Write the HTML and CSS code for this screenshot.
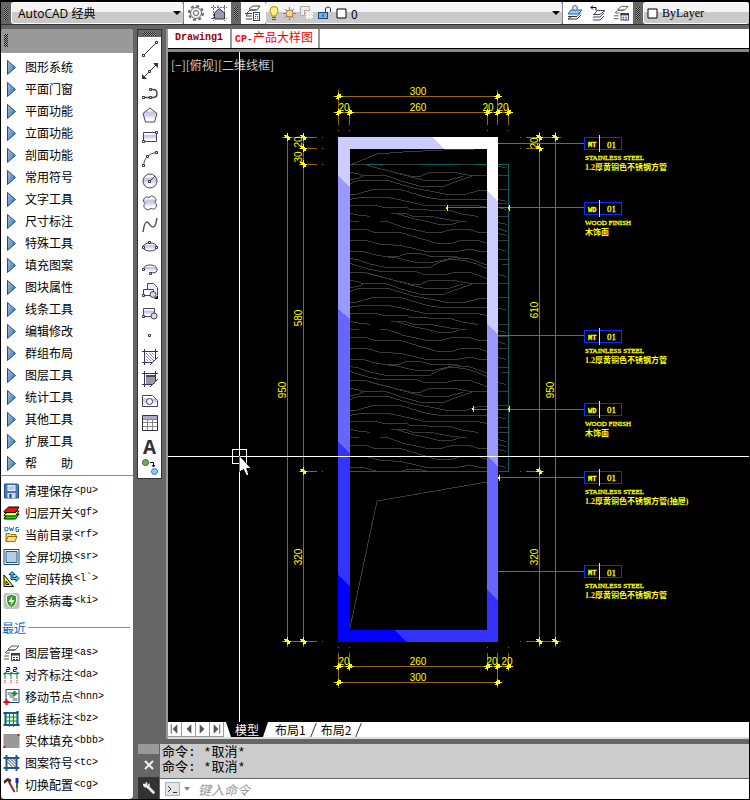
FILE: index.html
```
<!DOCTYPE html>
<html>
<head>
<meta charset="utf-8">
<title>CP-产品大样图</title>
<link rel="stylesheet" href="styles.css">
</head>
<body>
<svg class="defs" aria-hidden="true">
  <defs>
    <linearGradient id="blue" x1="0" y1="0" x2="1" y2="1"><stop offset="0" stop-color="#b4b4d8"/><stop offset=".5" stop-color="#6c9bd2"/><stop offset="1" stop-color="#235f9c"/></linearGradient>
    <linearGradient id="soft" x1="0" y1="0" x2="0" y2="1"><stop offset=".2" stop-color="#fff"/><stop offset=".3" stop-color="#c8c8c8"/><stop offset=".5" stop-color="#ccf"/><stop offset=".8" stop-color="#fff"/></linearGradient>
    <symbol id="tri" viewBox="0 0 9 15"><path d="M.5 .5v14l8-7z" fill="url(#blue)" stroke="#1f5373"/></symbol>
    <symbol id="layers" viewBox="0 0 17 16"><path d="M5 4 9 1h7l-4 4H5M2 8l3-3h7M1 11h5M3 8h4M1 14h5" fill="none" stroke="#555"/><rect x="8.500" y="8.500" width="8" height="7" fill="#fff" stroke="#446"/><path d="M8 9.500h9" stroke="#336" stroke-width="2"/><path d="M10 12.500h2m1 0h2m-5 2h2m1 0h2" stroke="#336"/></symbol>
  </defs>
</svg>

<header class="toolbar">
  <span class="grip"></span>
  <label class="combo workspace"><select aria-label="工作空间"><option>AutoCAD 经典</option></select></label>
  <div class="tools">
    <button aria-label="设置"><svg viewBox="0 0 16 16"><circle cx="8" cy="8" r="7" fill="none" stroke="#667" stroke-width="2" stroke-dasharray="3 2.500"/><circle cx="8" cy="8" r="5.500" fill="#eee" stroke="#667"/><circle cx="8" cy="8" r="2.500" fill="#fff" stroke="#556"/></svg></button>
    <button aria-label="工作空间"><svg viewBox="0 0 16 16"><path d="M2.500 0v16M13.500 0v16M0 2.500h16M0 13.500h16M7 0v3" stroke="#666" stroke-dasharray="2 1"/><path d="M3.500 14V8L8 3.500 13.500 8v6z" fill="#99a" stroke="#335"/></svg></button>
  </div>
  <span class="grip"></span>
  <div class="tools">
    <button aria-label="图层特性"><svg viewBox="0 0 16 16"><path d="M4 4 8 1h7l-3 4H4M2 8l3-3h6M0 8.500h7M3 8l-2 3h6M1 14h6" fill="none" stroke="#444"/><rect x="8.500" y="7.500" width="6" height="8" fill="#fff" stroke="#444"/><path d="M10 9.500h3" stroke="#26f"/><path d="M10 11.500h1m1 0h1m-3 2h1m1 0h1" stroke="#444"/></svg></button>
  </div>
  <label class="combo layer">
    <svg width="10" height="15" viewBox="0 0 10 15"><path d="M3 10C3 8 1 7 1 4.500a4 4 0 0 1 8 0C9 7 7 8 7 10z" fill="#ffef80" stroke="#a80"/><path d="M3 11.500h4m-4 2h4" stroke="#555"/></svg>
    <svg width="13" height="13" viewBox="0 0 13 13"><path d="M6.500 0v13M0 6.500h13M2 2l9 9M11 2l-9 9" stroke="#975"/><circle cx="6.500" cy="6.500" r="3.500" fill="#ffd98a" stroke="#a74"/></svg>
    <svg width="14" height="14" viewBox="0 0 14 14"><path d="M.5 9.500v-9h9v4h-5v5z" fill="#eee" stroke="#aaa"/><path d="M6 8h7M6 11h7M8 6v7m3-7v7" stroke="#fff" stroke-width="2" stroke-dasharray="2 1"/></svg>
    <svg width="14" height="14" viewBox="0 0 14 14"><rect x=".5" y="6.500" width="9" height="6" fill="#6bb4f0" stroke="#124b7c"/><path d="M7.500 6V3q0-2 2.500-2t2.500 2v3M5 8v3" fill="none" stroke="#333"/></svg>
    <svg width="11" height="11" viewBox="0 0 11 11"><path d="M1 1h9v9H1z" fill="#fff" stroke="#000"/></svg>
    <select aria-label="图层"><option>0</option></select>
  </label>
  <div class="tools">
    <button aria-label="置为当前"><svg viewBox="0 0 16 16"><path d="M1 14h9l4-4M1 11.500h9l4-4M1 14l3-2" fill="none" stroke="#333"/><path d="M1 9l3-4h11l-4 4z" fill="#9cf" stroke="#06b"/><circle cx="8" cy="3" r="2.500" fill="#ddd" stroke="#667"/></svg></button>
    <button aria-label="上一个图层"><svg viewBox="0 0 16 16"><path d="M3 15h7l4-4M3 12h7l4-4M3 9.500h7l5-4H7l-3 4" fill="none" stroke="#446"/><path d="M6 5.500V2.500H1M3 .5l-2 2 2 2" fill="none" stroke="#000"/></svg></button>
    <button aria-label="图层状态"><svg><use href="#layers"/></svg></button>
  </div>
  <span class="grip"></span>
  <label class="combo color"><svg width="11" height="11" viewBox="0 0 11 11"><path d="M1 1h9v9H1z" fill="#fff" stroke="#000"/></svg><select class="serif" aria-label="颜色"><option>ByLayer</option></select></label>
</header>

<main class="main">
  <nav class="palette">
    <div class="palette-head"><span class="grip"></span></div>
    <div class="menu">
      <button><svg><use href="#tri"/></svg>图形系统</button>
      <button><svg><use href="#tri"/></svg>平面门窗</button>
      <button><svg><use href="#tri"/></svg>平面功能</button>
      <button><svg><use href="#tri"/></svg>立面功能</button>
      <button><svg><use href="#tri"/></svg>剖面功能</button>
      <button><svg><use href="#tri"/></svg>常用符号</button>
      <button><svg><use href="#tri"/></svg>文字工具</button>
      <button><svg><use href="#tri"/></svg>尺寸标注</button>
      <button><svg><use href="#tri"/></svg>特殊工具</button>
      <button><svg><use href="#tri"/></svg>填充图案</button>
      <button><svg><use href="#tri"/></svg>图块属性</button>
      <button><svg><use href="#tri"/></svg>线条工具</button>
      <button><svg><use href="#tri"/></svg>编辑修改</button>
      <button><svg><use href="#tri"/></svg>群组布局</button>
      <button><svg><use href="#tri"/></svg>图层工具</button>
      <button><svg><use href="#tri"/></svg>统计工具</button>
      <button><svg><use href="#tri"/></svg>其他工具</button>
      <button><svg><use href="#tri"/></svg>扩展工具</button>
      <button><svg><use href="#tri"/></svg>帮　　助</button>
    </div>
    <div class="shortcuts">
      <button><svg viewBox="0 0 16 16"><path d="M1 1h13l1 1v13H1z" fill="#4679b8" stroke="#234f86"/><path d="M4 2h8v6H4z" fill="#eef"/><path d="M5 4h6M5 6h6" stroke="#8ab"/><path d="M4 10h8v5H4z" fill="#cde"/><path d="M6 11h2v4H6z" fill="#246"/></svg>清理保存<span>&lt;pu&gt;</span></button>
      <button><svg viewBox="0 0 16 16"><path d="M.5 13 5 9h10.500L12 14H1z" fill="#0f0" stroke="#000"/><path d="M.5 10 5 6h10.500L12 11H1z" fill="#ff0" stroke="#000"/><path d="M.5 6.500 5 2h10.500L12 7.500H1z" fill="#e11" stroke="#000"/></svg>归层开关<span>&lt;gf&gt;</span></button>
      <button><svg viewBox="0 0 16 16"><path d="M1.500 0v4h2l1-1V1l-1-1zM6 0l1 4 1-3 1 3 1-4M15 .5h-2.500v4H15v-2h-1" fill="none" stroke="#1668b8"/><path d="M2.500 14.500v-8h4l1 1h5v2" fill="#ffd76a" stroke="#a06800"/><path d="M2.500 14.500l2-5h9l-2 5z" fill="#ffe08a" stroke="#a06800"/></svg>当前目录<span>&lt;rf&gt;</span></button>
      <button><svg viewBox="0 0 16 16"><path d="M.5 .5h15v15H.5z" fill="#fff" stroke="#124b7c"/><path d="M2.500 2.500h11v11h-11z" fill="#b4cfe8" stroke="#357"/></svg>全屏切换<span>&lt;sr&gt;</span></button>
      <button><svg viewBox="0 0 16 16"><path d="M.5 4v11.500H10z" fill="#ff0" stroke="#000"/><path d="M2.500 10v3.500h3z" fill="#fff" stroke="#000"/><path d="M7.500 8.500v-5h-2L8.500.5l3 3h-2v3h3v-2l3 3-3 3v-2z" fill="#3df" stroke="#036"/></svg>空间转换<span>&lt;l`&gt;</span></button>
      <button><svg viewBox="0 0 16 16"><rect width="16" height="16" rx="3" fill="#bcc4bc"/><path d="M8 1l5 2v5q0 4-5 7-5-3-5-7V3z" fill="#3f9a2b" stroke="#fff"/><path d="M9 3 5 9h3l-1 4 4-6H8z" fill="#fff"/></svg>查杀病毒<span>&lt;ki&gt;</span></button>
    </div>
    <h2>最近</h2>
    <div class="recent">
      <button><svg><use href="#layers"/></svg>图层管理<span>&lt;as&gt;</span></button>
      <button><svg viewBox="0 0 16 16"><path d="M0 6.500h16M1.500 5v7m6-7v7m6-7v7M0 8l3-3m3 3 3-3m3 3 3-3" stroke="#183" fill="none"/><path d="M3 .5h3v2H3v2h3M10 .5h3v2h-3v2h3" stroke="#00f" fill="none"/><path d="M1.500 13v3m6-3v3m6-3v3" stroke="red" stroke-dasharray="1 1"/></svg>对齐标注<span>&lt;da&gt;</span></button>
      <button><svg viewBox="0 0 16 16"><path d="M2.500 .5h13v13h-13z" fill="#fff" stroke="#124b7c"/><path d="M4 3h4v3h3v3h3v3H9V9H6V6H4z" fill="#aaa"/><path d="M8 4.500h6M11 2v5" stroke="#182" stroke-width="2"/><path d="M0 13h6M3 10v6" stroke="red" stroke-width="2"/></svg>移动节点<span>&lt;hnn&gt;</span></button>
      <button><svg viewBox="0 0 16 16"><path d="M2 2h12v12H2z" fill="#dfd" stroke="#1a55a0" stroke-width="2"/><path d="M6 2v14M10 2v14M2 6h12M2 10h12" stroke="#182"/><path d="M0 2h2M0 14h2M14 0v2M14 14h2" stroke="#124b7c" stroke-width="2"/></svg>垂线标注<span>&lt;bz&gt;</span></button>
      <button><svg viewBox="0 0 16 16"><path d="M0 1h16v14H0z" fill="#999"/><path d="M14 1h2v2h-2zM0 13h2v2H0z" fill="red"/></svg>实体填充<span>&lt;bbb&gt;</span></button>
      <button><svg viewBox="0 0 16 16"><path d="M3 0v16M13 0v16M0 3h16M0 13h16" stroke="#225493" stroke-width="2"/><path d="M4 4l8 8M7 4l5 5M4 7l5 5M10 4l2 2" stroke="#346"/></svg>图案符号<span>&lt;tc&gt;</span></button>
      <button><svg viewBox="0 0 16 16"><path d="M0 4l4-3 3 1 1 2-2 2-2-2-3 3z" fill="#333"/><path d="M5 4l6 11" stroke="#a22" stroke-width="2"/><path d="M13.500 1v5" stroke="#22a" stroke-width="3"/><path d="M13.500 6v5" stroke="#182" stroke-width="2"/><path d="M13.500 11v4" stroke="#333"/></svg>切换配置<span>&lt;cg&gt;</span></button>
    </div>
  </nav>

  <div class="work">
    <div class="work-row">
      <div class="draw-tools">
        <span class="grip wide"></span>
        <button aria-label="直线"><svg viewBox="0 0 16 16"><path d="M1 15 15 1" stroke="#333"/><path d="M.5 13.500h2v2h-2zm13-13h2v2h-2z" fill="#fff" stroke="#333"/></svg></button>
        <button aria-label="构造线"><svg viewBox="0 0 16 16"><path d="M1 15 15 1" stroke="#333"/><path d="M0 11v5h5zM16 5V0h-5z" fill="#333"/><path d="M6.500 7.500h2v2h-2z" fill="#fff" stroke="#333"/></svg></button>
        <button aria-label="多段线"><svg viewBox="0 0 16 16"><path d="M1 12.500h10q4 0 4-4t-4-4H9" fill="none" stroke="#445" stroke-width="1.500"/><path d="M.5 11.500h2v2h-2zm7 0h2v2h-2zm0-8h2v2h-2z" fill="#fff" stroke="#333"/></svg></button>
        <button aria-label="正多边形"><svg viewBox="0 0 16 16"><path d="M8 1l7 5.500L12.500 15h-9L1 6.500z" fill="url(#soft)" stroke="#445"/></svg></button>
        <button aria-label="矩形"><svg viewBox="0 0 16 16"><path d="M1.500 3.500h13v9h-13z" fill="url(#soft)" stroke="#445"/><path d="M.5 11.500h2v2h-2zm13-9h2v2h-2z" fill="#fff" stroke="#333"/></svg></button>
        <button aria-label="圆弧"><svg viewBox="0 0 16 16"><path d="M1.500 14Q3 3 14 1.500" fill="none" stroke="#456"/><path d="M.5 13.500h2v2h-2zm13-13h2v2h-2zm-9 4h2v2h-2z" fill="#fff" stroke="#333"/></svg></button>
        <button aria-label="圆"><svg viewBox="0 0 16 16"><circle cx="8" cy="8" r="7" fill="url(#soft)" stroke="#445"/><path d="M8 8l5-5" stroke="#333"/><path d="M6.500 7.500h2v2h-2z" fill="#fff" stroke="#333"/></svg></button>
        <button aria-label="修订云线"><svg viewBox="0 0 16 16"><path d="M3 8.500A3.500 3.500 0 1 1 7 2.500A3.500 3.500 0 1 1 13 7.500A3.500 3.500 0 1 1 9 13.500A4 3.500 0 1 1 3 8.500z" fill="url(#soft)" stroke="#456"/></svg></button>
        <button aria-label="样条曲线"><svg viewBox="0 0 16 16"><path d="M1 15C2 8 3 5 5 5s3 5 6 5 3-5 4-9" fill="none" stroke="#556" stroke-width="1.500"/></svg></button>
        <button aria-label="椭圆"><svg viewBox="0 0 16 16"><ellipse cx="8" cy="8" rx="7" ry="4" fill="url(#soft)" stroke="#445"/><path d="M.5 7.500h2v2h-2zm13 0h2v2h-2zm-7-5h2v2h-2z" fill="#fff" stroke="#333"/></svg></button>
        <button aria-label="椭圆弧"><svg viewBox="0 0 16 16"><path d="M1.500 8Q2 4 8 4t7 4-6 4" fill="url(#soft)" stroke="#445"/><path d="M.5 7.500h2v2h-2zm7 4h2v2h-2z" fill="#fff" stroke="#333"/></svg></button>
        <button aria-label="插入块"><svg viewBox="0 0 16 16"><path d="M5.500 6V.5h6l4 4V12" fill="#eef" stroke="#446"/><path d="M1.500 6.500h10v6h-10z" fill="#fff" stroke="#445"/><circle cx="11" cy="11.500" r="3" fill="#ddd" stroke="#445"/><path d="M16 12v4h-4z"/><path d="M.5 11.500h2v2h-2z" fill="#fff" stroke="#333"/></svg></button>
        <button aria-label="创建块"><svg viewBox="0 0 16 16"><path d="M1.500 3.500h11v8h-11z" fill="url(#soft)" stroke="#445"/><circle cx="12" cy="11" r="3" fill="#ddd" stroke="#445"/><path d="M.5 10.500h2v2h-2z" fill="#fff" stroke="#333"/></svg></button>
        <button aria-label="点"><svg viewBox="0 0 16 16"><path d="M6.500 7.500h2v2h-2z" fill="#fff" stroke="#336"/></svg></button>
        <button aria-label="图案填充"><svg viewBox="0 0 16 16"><path d="M2.500 0v16M13.500 0v10M0 2.500h16M0 13.500h10M8 16l8-8" stroke="#336"/><path d="M4 4l8 8M7 4l5 5M4 7l5 5M10 4l2 2M4 10l2 2" stroke="#88a"/></svg></button>
        <button aria-label="渐变色"><svg viewBox="0 0 16 16"><path d="M4 4h9v9H4z" fill="#999"/><path d="M4 4h9v2H4z" fill="#446"/><path d="M2.500 0v16M13.500 0v10M0 2.500h16M0 13.500h10M8 16l8-8" stroke="#336"/></svg></button>
        <button aria-label="面域"><svg viewBox="0 0 16 16"><path d="M.5 2.500h10l5 5v6H.5z" fill="url(#soft)" stroke="#446"/><circle cx="7.500" cy="8.500" r="3" fill="#fff" stroke="#336"/></svg></button>
        <button aria-label="表格"><svg viewBox="0 0 16 16"><path d="M.5 .5h15v15H.5z" fill="#fff" stroke="#333"/><path d="M1 2.500h14" stroke="#aac" stroke-width="3"/><path d="M5.500 4v11m5-11v11M1 7.500h14M1 11.500h14M1 4.500h14" stroke="#888"/></svg></button>
        <button aria-label="多行文字" class="letter">A</button>
        <button aria-label="添加选定对象"><svg viewBox="0 0 16 16"><circle cx="3.500" cy="3.500" r="3" fill="#7a5" stroke="#363"/><circle cx="12.500" cy="12.500" r="3" fill="#8cf" stroke="#37a"/><path d="M8 3.500h3.500V8M10 6l1.500 2L13 6" fill="none" stroke="#000"/></svg></button>
      </div>

      <section class="document">
        <div class="file-tabs"><button class="active">Drawing1</button><button><span>CP-</span>产品大样图</button></div>
        <div class="canvas">
          <svg class="drawing">
            <defs>
              <clipPath id="panel"><rect x="350" y="165" width="137" height="306"/></clipPath>
              <clipPath id="frame"><path clip-rule="evenodd" d="M338 137h160v505H338zM350 149v481h137V149z"/></clipPath>
              <g id="grain" fill="none" stroke="#3a3a3a" stroke-width="3">
                <path d="M292 256 320 264 370 276 427 290H448L475 279H560L605 287H651M240 278 262 280 280 288 262 296 240 298M280 288H350L400 305 455 320H520L560 304 605 289M330 266 420 290 470 303H530L580 288M240 312 262 302H355L430 324 500 337 540 345H580L625 332 651 330M240 344 262 342 310 328H390L470 352 510 358H651M240 358 275 352H355L415 365 465 376H620L651 382"/>
                <path d="M240 376H317L340 382H410L420 388 500 391H540L575 402 623 409M240 400 265 405 300 409M363 400 410 402 425 408 480 409 540 420 575 424H590M385 403 430 416 470 424 505 433H545L570 425M240 420 245 424H267M330 424 355 426 400 442 475 458H510L545 449H600L625 457 651 459M240 448H290L310 457H390L440 472 500 490H545L575 481H625L651 490"/>
                <path d="M240 481 290 482 330 493 390 496 430 505 470 515H555L605 507 625 513 651 516M240 514 285 516 325 527 355 530H385L410 520H450L480 529H545L575 537H600L651 555M345 530 380 534 420 544 440 547H490L530 538 560 530 575 537M240 536 260 538 300 552 345 562H480L510 546 540 538 580 541 620 552 651 566M240 550 290 566 340 576H440L470 585H520L555 577H600L651 596M240 579H290L370 600"/>
              </g>
              <g id="chip" fill="none" stroke="#ff0"><path d="M-2 2.500h2M-1 1.500h4M-3.500 .5H5M-1-.5h4M1-1.500h2"/><path d="M.5-3V4"/></g>
              <g id="chipv" fill="none" stroke="#ff0"><path d="M-3-1.500h3M-2-.5h4M-3 .5h7M0 1.500h3M1 2.500h2"/><path d="M.5-4V4"/></g>
              <g id="dot" fill="#ff0"><path d="M-2 0h1v-1h1v-2h1v6h-1V1h-1V0z"/></g>
              <g id="tag"><path d="M.5 .5h37v12H.5z" fill="none" stroke="#03f"/><path d="M15.500-2v17" stroke="#ff0"/></g>
            </defs>

            <g transform="translate(-168 -52)">
            <g class="grain">
              <path d="M350 165 377 154 403 152 443 150 476 149" fill="none" stroke="#3a3a3a"/>
              <g clip-path="url(#panel)">
                <use href="#grain" transform="translate(270 80) scale(.33333)"/>
                <use href="#grain" transform="translate(270 188) scale(.33333)"/>
                <use href="#grain" transform="translate(270 296) scale(.33333)"/>
              </g>
              <path d="M350 628 377 501 487 482" fill="none" stroke="#3a3a3a"/>
              <path d="M498 166.500l8 1M498 175.500h10M498 189.500h10M498 199.500l9 2M498 203.500h10M498 207.500l8 2M498 216.500h10M498 222.500l9 2M498 228.500l9 3M498 233.500l9 2M498 240.500h10M498 248.500l8 3M498 259.500h10M502 264.500h6M498 274.500l8 2M498 283.500h10M498 297.500h10M498 308.500l8 1M498 324.500h10M498 330.500l8 2M498 336.500h10M498 341.500l8 3M498 348.500h10M498 357.500l8 2M498 367.500h10M502 372.500h6M498 382.500l8 2M498 391.500h10M498 405.500h10M498 417.500l8 1M498 427.500h10M498 432.500h10M498 439.500l8 2M498 444.500l8 2M498 449.500l8 2M498 456.500h10M498 465.500l8 2" fill="none" stroke="#3a3a3a"/>
            </g>
            <path d="M367 164.500h16m37 0h40m14 0h13m11 0h10.500v306.500h-10M487 471.500H350" fill="none" stroke="#076666"/>
            <path d="M350 164.500h17m16 0h37m40 0h14" stroke="#3a3a3a"/>

            <g clip-path="url(#frame)">
              <path d="M338 137h160v505H338z" fill="#ccf"/>
              <path d="M432 137h66v65l-11-12-43-41z" fill="#fff"/>
              <path d="M338 176l12 11v140h-12z" fill="#99f"/>
              <path d="M338 309l12 10v140h-12z" fill="#66f"/>
              <path d="M338 442l12 11v140h-12z" fill="#33f"/>
              <path d="M338 575l12 11v44h45l11 12h-68z" fill="#00f"/>
              <path d="M487 324l11 11v140h-11z" fill="#99f"/>
              <path d="M487 456l11 11v140h-11z" fill="#66f"/>
              <path d="M487 590l11 10v42h-92l-11-12h92z" fill="#33f"/>
            </g>

            <g fill="none" stroke="#960">
              <path d="M333 96.500h168M333 112.500h180M338.500 90v35M338.500 130v1M349.500 107v18M349.500 130v1M487.500 107v18M487.500 130v1M497.500 90v35M508.500 107v18M508.500 130v1"/>
              <path d="M333 666.500h180M333 682.500h165M338.500 653v35M338.500 647v1M349.500 653v18M349.500 647v1M487.500 653v18M487.500 647v1M497.500 653v35M508.500 653v18M508.500 647v1"/>
              <path d="M287.500 137v510M303.500 137v510M282 137.500h35M322 137.500h1M299 148.500h18M322 148.500h1M299 164.500h18M322 164.500h1M299 471.500h18M322 471.500h1M282 641.500h35M322 641.500h1"/>
              <path d="M539.500 132v515M555.500 132v515M526 137.500h35M520 137.500h1M526 148.500h18M520 148.500h1M526 471.500h18M520 471.500h1M526 641.500h35M520 641.500h1"/>
              <path d="M498 143.500h86M447 207.500h40M498 207.500h86M498 335.500h86M473 409.500h14M498 409.500h86M499 477.500h85M498 571.500h86"/>
            </g>
            <use href="#chip" x="338" y="96"/><use href="#chip" x="497" y="96"/><use href="#chip" x="338" y="112"/><use href="#chip" x="349" y="112"/><use href="#chip" x="487" y="112"/><use href="#chip" x="497" y="112"/><use href="#chip" x="508" y="112"/>
            <use href="#chip" x="338" y="666"/><use href="#chip" x="349" y="666"/><use href="#chip" x="487" y="666"/><use href="#chip" x="497" y="666"/><use href="#chip" x="508" y="666"/><use href="#chip" x="338" y="682"/><use href="#chip" x="497" y="682"/>
            <use href="#chipv" x="287" y="137"/><use href="#chipv" x="303" y="137"/><use href="#chipv" x="303" y="148"/><use href="#chipv" x="303" y="164"/><use href="#chipv" x="303" y="471"/><use href="#chipv" x="287" y="641"/><use href="#chipv" x="303" y="641"/>
            <use href="#chipv" x="539" y="137"/><use href="#chipv" x="555" y="137"/><use href="#chipv" x="539" y="148"/><use href="#chipv" x="539" y="471"/><use href="#chipv" x="539" y="641"/><use href="#chipv" x="555" y="641"/>
            <use href="#dot" x="447" y="208"/><use href="#dot" x="509" y="208"/><use href="#dot" x="473" y="409"/><use href="#dot" x="509" y="409"/><use href="#dot" x="499" y="478"/>

            <g class="dim">
              <text x="418" y="95">300</text><text x="344" y="111">20</text><text x="418" y="111">260</text><text x="488" y="111">20</text><text x="503" y="111">20</text>
              <text x="344" y="665">20</text><text x="418" y="665">260</text><text x="492" y="665">20</text><text x="507" y="665">20</text><text x="418" y="681">300</text>
              <text transform="translate(302 142) rotate(-90)">20</text><text transform="translate(302 157) rotate(-90)">30</text>
              <text transform="translate(302 318) rotate(-90)">580</text><text transform="translate(286 390) rotate(-90)">950</text><text transform="translate(302 557) rotate(-90)">320</text>
              <text transform="translate(538 143) rotate(-90)">20</text><text transform="translate(538 310) rotate(-90)">610</text><text transform="translate(554 390) rotate(-90)">950</text><text transform="translate(538 557) rotate(-90)">320</text>
            </g>

            <g class="note">
              <g transform="translate(584 137)"><use href="#tag"/><text class="code" x="4" y="10">MT</text><text class="num" x="23" y="11">01</text><text x="1" y="23">STAINLESS STEEL</text><text class="cn" x="1" y="33">1.2厚黄铜色不锈钢方管</text></g>
              <g transform="translate(584 202)"><use href="#tag"/><text class="code" x="4" y="10">WD</text><text class="num" x="23" y="10">01</text><text x="1" y="23">WOOD FINISH</text><text class="cn" x="1" y="33">木饰面</text></g>
              <g transform="translate(584 330)"><use href="#tag"/><text class="code" x="4" y="10">MT</text><text class="num" x="23" y="10">01</text><text x="1" y="23">STAINLESS STEEL</text><text class="cn" x="1" y="33">1.2厚黄铜色不锈钢方管</text></g>
              <g transform="translate(584 403)"><use href="#tag"/><text class="code" x="4" y="10">WD</text><text class="num" x="23" y="10">01</text><text x="1" y="23">WOOD FINISH</text><text class="cn" x="1" y="33">木饰面</text></g>
              <g transform="translate(584 471)"><use href="#tag"/><text class="code" x="4" y="10">MT</text><text class="num" x="23" y="10">01</text><text x="1" y="23">STAINLESS STEEL</text><text class="cn" x="1" y="33">1.2厚黄铜色不锈钢方管(抽屉)</text></g>
              <g transform="translate(584 565)"><use href="#tag"/><text class="code" x="4" y="10">MT</text><text class="num" x="23" y="11">01</text><text x="1" y="23">STAINLESS STEEL</text><text class="cn" x="1" y="33">1.2厚黄铜色不锈钢方管</text></g>
            </g>

            <text class="view" x="171" y="70">[−][俯视][二维线框]</text>
            <path d="M239.500 52v670M168 456.500h582M232.500 449.500h14v14h-14z" fill="none" stroke="#fff"/>
            <path d="M239.500 456v16l4-3 3 6 2-1-2-6h4z" fill="#fff" stroke="#000" stroke-width=".5"/>
            </g>
          </svg>
        </div>
        <div class="layout-tabs">
          <button class="step" aria-label="第一个"><svg viewBox="0 0 14 14"><path d="M3.500 2v10" stroke="#555"/><path d="M10 2v10L5 7z" fill="#555"/></svg></button>
          <button class="step" aria-label="上一个"><svg viewBox="0 0 14 14"><path d="M10 2v10L5 7z" fill="#555"/></svg></button>
          <button class="step" aria-label="下一个"><svg viewBox="0 0 14 14"><path d="M4 2v10l5-5z" fill="#555"/></svg></button>
          <button class="step" aria-label="最后一个"><svg viewBox="0 0 14 14"><path d="M4 2v10l5-5z" fill="#555"/><path d="M10.500 2v10" stroke="#555"/></svg></button>
          <button class="sheet active">模型</button><button class="sheet">布局1</button><button class="sheet">布局2</button>
        </div>
      </section>
    </div>

    <section class="command">
      <div class="command-side">
        <span class="handle"></span>
        <button aria-label="关闭"><svg viewBox="0 0 14 14"><path d="M3 3l8 8M11 3l-8 8" stroke="#eee" stroke-width="2"/></svg></button>
        <button class="dark" aria-label="自定义"><svg viewBox="0 0 16 16"><path d="M6 6l8 8" stroke="#eee" stroke-width="3"/><path d="M5 1.500v3h-3M2 3q0 4 3.500 3.500T7.500 3" fill="none" stroke="#eee" stroke-width="2"/></svg></button>
      </div>
      <div class="command-body">
        <div class="history"><p>命令: *取消*</p><p>命令: *取消*</p></div>
        <label class="prompt">
          <svg width="15" height="14" viewBox="0 0 15 14"><path d="M.5 .5h14v13H.5z" fill="#e4e4e8" stroke="#9bb"/><path d="M3 4l3 3-3 3M8 10.500h4" fill="none" stroke="#334"/></svg>
          <svg width="6" height="4" viewBox="0 0 6 4"><path d="M0 0h6L3 4z" fill="#888"/></svg>
          <input type="text" placeholder="键入命令" aria-label="命令">
        </label>
      </div>
    </section>
  </div>
</main>
</body>
</html>
```
FILE: styles.css
```
* { box-sizing: border-box; }

body {
  margin: 0;
  min-height: 100vh;
  display: flex;
  flex-direction: column;
  background: #666;
  border: 1px solid #000;
  border-top-width: 2px;
  font-family: "Noto Sans CJK SC", sans-serif;
  font-size: 12px;
  color: #000;
}

button, select, input {
  font: inherit;
  color: inherit;
  border: 0;
  margin: 0;
  padding: 0;
  background: none;
  border-radius: 0;
}

svg { display: block; flex: none; }
.defs { position: absolute; width: 0; height: 0; }

.grip {
  flex: none;
  width: 4px;
  height: 13px;
  margin: 0 3px;
  background: repeating-conic-gradient(#222 0 25%, #999 0 50%) 0 0 / 2px 2px;
}
.grip.wide { width: 13px; height: 4px; margin: 0 0 2px; }

/* top toolbar */
.toolbar {
  display: flex;
  align-items: center;
  height: 23px;
  border-bottom: 1px solid #333;
}
.combo {
  position: relative;
  display: flex;
  align-items: center;
  gap: 4px;
  height: 22px;
  padding-left: 6px;
  background: linear-gradient(#f4f4f4 46%, #c9c9c9 46%);
  border: 1px solid #fff;
  border-right-color: #888;
  border-radius: 3px;
}
.combo select { appearance: none; flex: 1; min-width: 0; }
.workspace { width: 173px; font-family: "Open Sans", "Noto Sans CJK SC", sans-serif; }
.layer { flex: 1 1 298px; padding-left: 3px; }
.color { flex: 0 1 106px; padding-left: 3px; border-right: 0; }
.workspace::after, .layer::after {
  content: "";
  border: 4px solid transparent;
  border-top-color: #000;
  border-bottom: 0;
  margin-right: 2px;
}
.serif { font-family: "Liberation Serif", serif; }
.tools {
  display: flex;
  align-items: center;
  gap: 7px;
  height: 22px;
  padding: 0 4px;
  background: #fff;
}
.tools svg { width: 16px; height: 16px; }

/* side palette */
.main { flex: 1; display: flex; padding-top: 4px; }
.palette {
  width: 132px;
  flex: none;
  background: #fff;
  border-radius: 4px;
}
.palette-head {
  height: 24px;
  padding-top: 5px;
  background: #999;
  border-radius: 4px 4px 0 0;
}
.palette-head .grip { display: block; }
.palette button {
  display: flex;
  align-items: center;
  gap: 1px;
  width: 100%;
  height: 22px;
  line-height: 22px;
  text-align: left;
}
.palette button span { font-family: "Liberation Mono", monospace; font-size: 10px; }
.menu { padding: 3px 0 1px; border-bottom: 1px solid #888; }
.menu svg { width: 9px; height: 15px; margin: 0 8px 0 6px; }
.shortcuts { padding: 4px 0 0; }
.shortcuts svg, .recent svg { width: 17px; height: 16px; margin: 0 4px 0 2px; }
.palette h2 {
  display: flex;
  align-items: center;
  gap: 2px;
  height: 30px;
  margin: 0 3px 0 1px;
  font-size: 12px;
  font-weight: 400;
  color: #06c;
}
.palette h2::after { content: ""; flex: 1; height: 1px; background: #888; }

/* work area */
.work { flex: 1; min-width: 0; display: flex; flex-direction: column; padding-left: 4px; }
.work-row { flex: 1; display: flex; min-height: 0; }
.draw-tools {
  align-self: flex-start;
  width: 25px;
  flex: none;
  display: flex;
  flex-direction: column;
  align-items: center;
  padding: 2px 0 0;
  border: 1px solid #333;
  background: linear-gradient(#666 7px, #fff 7px);
}
.draw-tools button { height: 22px; display: grid; place-items: center; }
.draw-tools svg { width: 16px; height: 16px; }
.draw-tools .letter { font: 700 19px "Open Sans", sans-serif; color: #333; }

.document {
  flex: 1;
  min-width: 0;
  display: flex;
  flex-direction: column;
  margin-left: 4px;
  border-left: 2px solid #999;
  background: #fff;
}
.file-tabs { display: flex; height: 20px; border-bottom: 1px solid #000; }
.file-tabs button {
  padding: 0 5px 2px 3px;
  border-right: 2px solid #999;
  line-height: 16px;
  color: red;
}
.file-tabs .active { width: 64px; padding-left: 5px; color: #900; }
.file-tabs .active, .file-tabs span { font-family: "Liberation Mono", monospace; font-size: 10px; font-weight: 700; }
.canvas { flex: 1; min-height: 0; position: relative; background: #000; border-top: 3px solid #888; overflow: hidden; }
.drawing { position: absolute; inset: 0; width: 100%; height: 100%; shape-rendering: crispEdges; }
.dim text { fill: #ff0; font: 10px "Liberation Sans", sans-serif; text-anchor: middle; }
.note text { fill: #ff0; font: 7px "Liberation Serif", serif; stroke: #ff0; stroke-width: .3px; }
.note .cn { font: 700 8px "Liberation Serif", "Noto Sans CJK SC", serif; stroke: none; }
.note .code { font: 700 7px "Liberation Mono", monospace; }
.note .num { font: 9px "Liberation Serif", serif; }
.view { fill: #ccc; font: 12px "Noto Sans CJK SC", sans-serif; }

.layout-tabs { display: flex; height: 17px; border-bottom: 2px solid #ddd; }
.step { width: 14px; border-right: 1px solid #999; border-bottom: 1px solid #999; }
.step svg { width: 13px; height: 14px; }
.sheet { position: relative; padding: 0 8px 0 7px; line-height: 14px; }
.sheet.active {
  margin-left: 2px;
  padding: 0 9px;
  background: #000;
  color: #fff;
  clip-path: polygon(0 0, 100% 0, 88% 100%, 12% 100%);
}
.sheet:not(.active)::after {
  content: "";
  position: absolute;
  inset: 1px 0 0 auto;
  width: 1px;
  background: #333;
  transform: skewX(-22deg);
}

/* command line */
.command { display: flex; margin-top: 5px; height: 55px; }
.command-side { width: 23px; flex: none; display: flex; flex-direction: column; padding: 0 1px; }
.command-side .handle { height: 10px; background: #999; }
.command-side button { flex: 1; display: grid; place-items: center; }
.command-side .dark { background: #333; }
.command-side svg { width: 14px; height: 14px; }
.command-body { flex: 1; min-width: 0; display: flex; flex-direction: column; }
.history { flex: 1; padding: 1px 2px; background: #ccc; border-bottom: 1px solid #666; }
.history p { margin: 0; font: 13px/15px "Liberation Mono", "Noto Sans CJK SC", monospace; }
.prompt { display: flex; align-items: center; gap: 4px; height: 20px; padding-left: 5px; background: #fff; }
.prompt input { flex: 1; min-width: 0; margin-left: 4px; font-size: 13px; font-style: italic; outline: 0; }
.prompt input::placeholder { color: #999; }
```
